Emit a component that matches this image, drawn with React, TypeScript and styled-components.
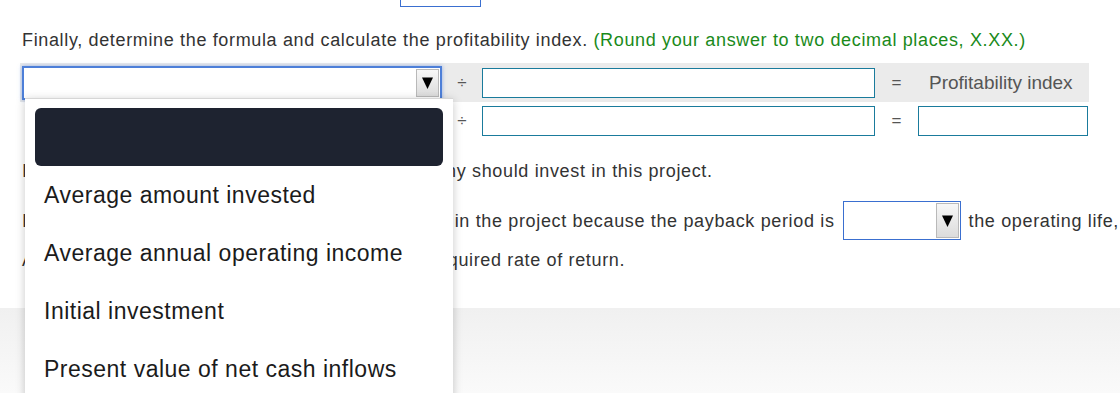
import styled, { createGlobalStyle } from "styled-components";

const GlobalStyle = createGlobalStyle`
  html, body {
    margin: 0;
    padding: 0;
    background: #fff;
  }
  body {
    font-family: "Liberation Sans", Arial, sans-serif;
    color: #333;
  }
`;

const Page = styled.div`
  position: relative;
  width: 1120px;
  height: 393px;
  overflow: hidden;
  background: #fff;
`;

const TopStub = styled.div`
  margin-left: 400px;
  width: 79px;
  height: 6px;
  border: 1px solid #3a6fd0;
  border-top: none;
`;

const Prompt = styled.p`
  margin: 22px 0 0 22px;
  font-size: 18px;
  letter-spacing: 0.65px;
  line-height: 22px;
  color: #333;
  white-space: nowrap;

  .hint {
    color: #1a8a1a;
  }
`;

const Formula = styled.div`
  margin: 12px 0 0 20px;
  width: 1069px;
`;

interface RowProps {
  shaded?: boolean;
}

const FormulaRow = styled.div<RowProps>`
  display: grid;
  grid-template-columns: 422px 40px 393px 43px 170px;
  align-items: center;
  height: ${(p) => (p.shaded ? "39px" : "37px")};
  background: ${(p) => (p.shaded ? "#ebebeb" : "transparent")};
`;

interface SelectProps {
  focused?: boolean;
}

const SelectBox = styled.div<SelectProps>`
  box-sizing: border-box;
  display: flex;
  flex-shrink: 0;
  justify-content: flex-end;
  align-items: center;
  margin-left: 2px;
  height: 34px;
  border: ${(p) => (p.focused ? "2px solid #4d7fd8" : "1px solid #3a6fd0")};
  box-shadow: ${(p) => (p.focused ? "0 0 4px rgba(70, 120, 215, 0.55)" : "none")};
  background: #fff;
  padding: 0 1px;
`;

const ArrowButton = styled.div`
  box-sizing: border-box;
  width: 23px;
  height: calc(100% - 2px);
  display: flex;
  align-items: center;
  justify-content: center;
  border: 1px solid #b9b9b9;
  background: linear-gradient(#f7f7f7, #dcdcdc);
`;

const Operator = styled.div`
  text-align: center;
  font-size: 17px;
  color: #555;
`;

const Field = styled.div`
  box-sizing: border-box;
  height: 30px;
  border: 1px solid #1a7b9c;
  background: #fff;
`;

const ResultLabel = styled.div`
  padding-left: 11px;
  font-size: 19px;
  color: #555;
  white-space: nowrap;
`;

const Paragraphs = styled.div`
  margin-top: 21px;
  display: flex;
  flex-direction: column;
  gap: 9px;
`;

const Paragraph = styled.p`
  margin: 0 0 0 22px;
  min-height: 22px;
  font-size: 18px;
  letter-spacing: 0.65px;
  line-height: 22px;
  color: #333;
  white-space: nowrap;
  display: flex;
  align-items: center;
  gap: 8px;

  &:first-child {
    margin-bottom: 10px;
  }
`;

const InlineSelect = styled(SelectBox)`
  width: 118px;
  height: 39px;
  margin-left: 0;
  padding: 0 1px;
`;

const Footer = styled.div`
  position: absolute;
  left: 0;
  right: 0;
  top: 308px;
  bottom: 0;
  background: linear-gradient(#f0f0f0, #fafafa);
`;

const Menu = styled.div`
  position: absolute;
  left: 25px;
  top: 98px;
  width: 428px;
  bottom: -10px;
  background: #fff;
  border-top: 1px solid #d6d6d6;
  box-shadow: 0 2px 9px rgba(0, 0, 0, 0.22);
  padding: 9px 10px 0;
  box-sizing: border-box;
  z-index: 2;
`;

interface OptionProps {
  active?: boolean;
}

const Option = styled.div<OptionProps>`
  height: 58px;
  display: flex;
  align-items: center;
  padding-left: 9px;
  border-radius: 6px;
  font-size: 23px;
  letter-spacing: 0.5px;
  color: #1b1b1b;
  white-space: nowrap;
  background: ${(p) => (p.active ? "#1e2330" : "transparent")};
`;

const Arrow = () => (
  <ArrowButton>
    <svg width="11" height="12" viewBox="0 0 11 12">
      <path d="M0 0.5 H11 L5.5 12 Z" fill="#000" />
    </svg>
  </ArrowButton>
);

const options = [
  "",
  "Average amount invested",
  "Average annual operating income",
  "Initial investment",
  "Present value of net cash inflows",
];

export default function App() {
  return (
    <Page>
      <GlobalStyle />
      <TopStub />
      <Prompt>
        Finally, determine the formula and calculate the profitability index.{" "}
        <span className="hint">(Round your answer to two decimal places, X.XX.)</span>
      </Prompt>
      <Formula>
        <FormulaRow shaded>
          <SelectBox focused>
            <Arrow />
          </SelectBox>
          <Operator>÷</Operator>
          <Field />
          <Operator>=</Operator>
          <ResultLabel>Profitability index</ResultLabel>
        </FormulaRow>
        <FormulaRow>
          <div />
          <Operator>÷</Operator>
          <Field />
          <Operator>=</Operator>
          <Field />
        </FormulaRow>
      </Formula>
      <Paragraphs>
        <Paragraph>Indicate, based on this result, whether the company should invest in this project.</Paragraph>
        <Paragraph>
          In conclusion the company certainly should invest in the project because the payback period is
          <InlineSelect>
            <Arrow />
          </InlineSelect>
          the operating life,
        </Paragraph>
        <Paragraph>Also, the accounting rate of return exceeds the required rate of return.</Paragraph>
      </Paragraphs>
      <Footer />
      <Menu>
        {options.map((o, i) => (
          <Option key={i} active={i === 0}>
            {o}
          </Option>
        ))}
      </Menu>
    </Page>
  );
}
